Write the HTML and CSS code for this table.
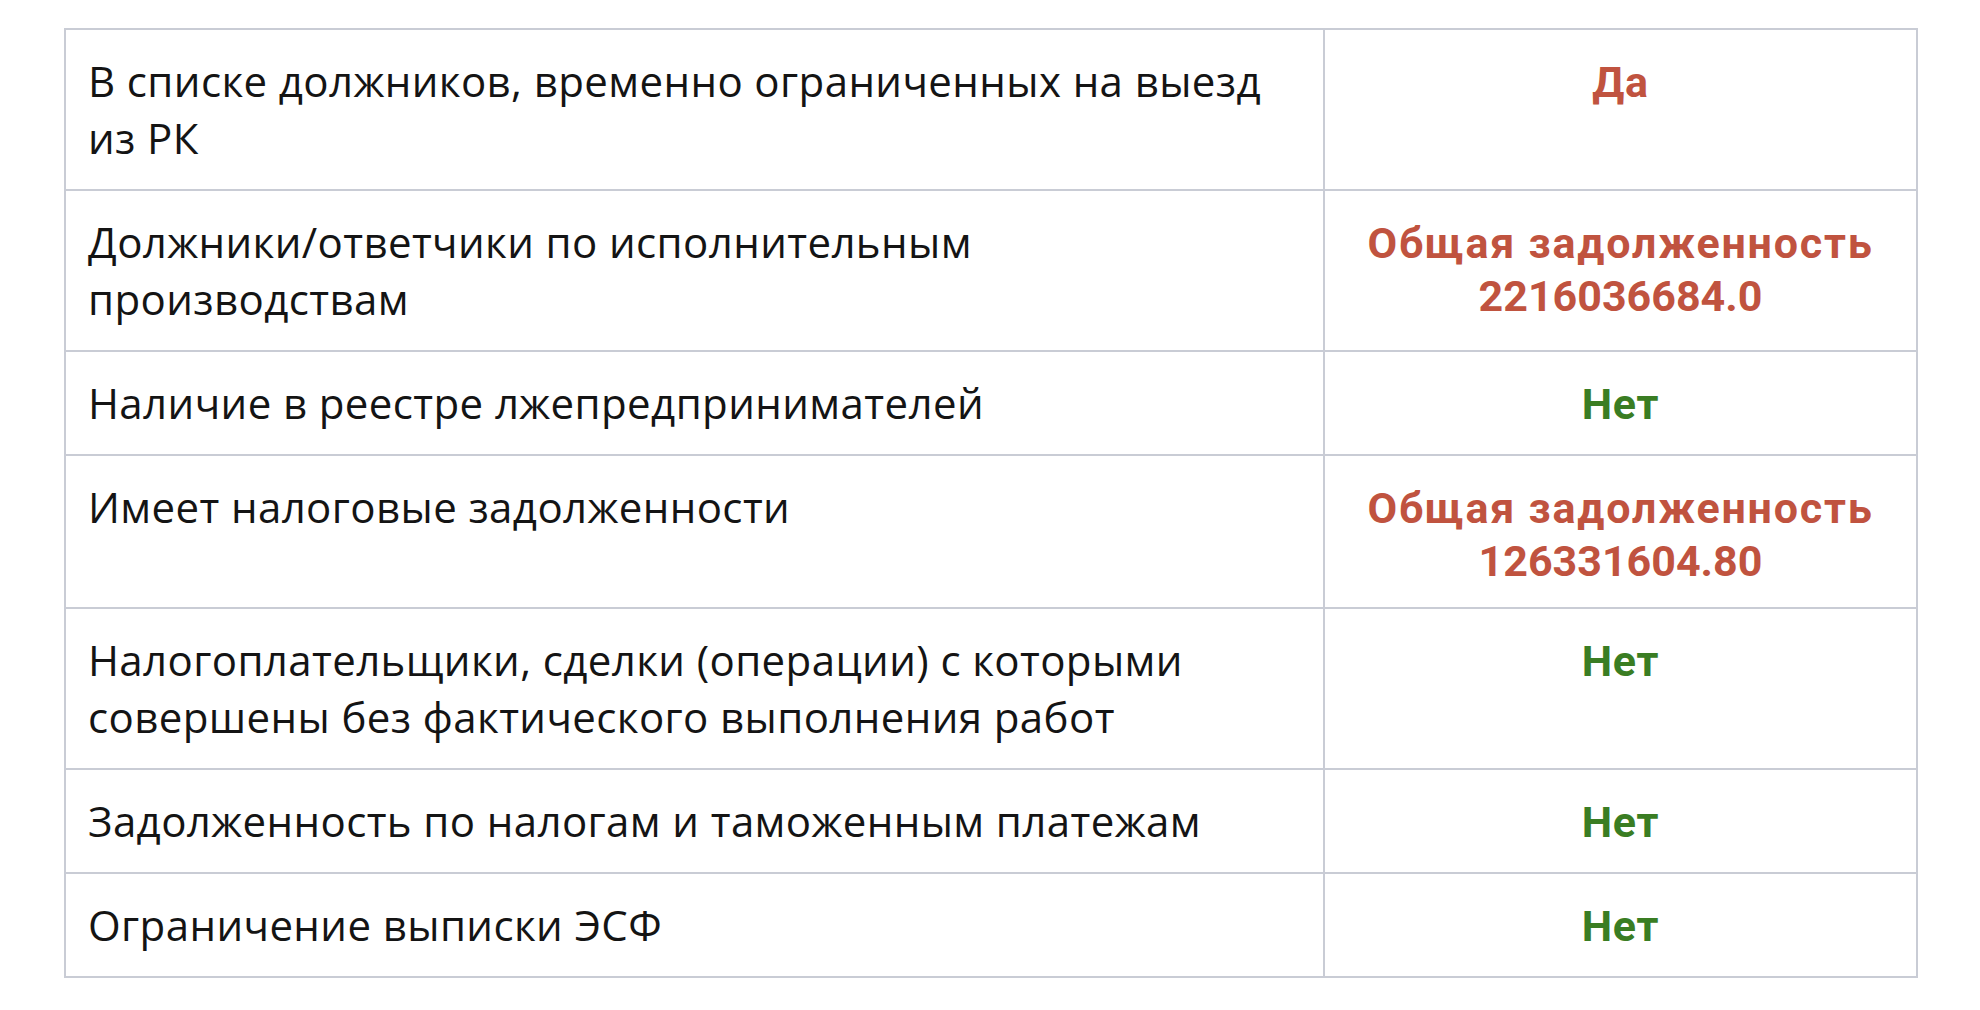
FILE: index.html
```html
<!DOCTYPE html>
<html lang="ru">
<head>
<meta charset="utf-8">
<title>Проверка</title>
<link rel="stylesheet" href="styles.css">
</head>
<body>
<div class="page">
  <table class="checks">
    <colgroup><col class="c-label"><col class="c-value"></colgroup>
    <tbody>
      <tr>
        <td class="label">В списке должников, временно ограниченных на выезд из РК</td>
        <td class="value bad">Да</td>
      </tr>
      <tr>
        <td class="label">Должники/ответчики по исполнительным производствам</td>
        <td class="value bad"><span class="caption">Общая задолженность</span><br><span class="amount">2216036684.0</span></td>
      </tr>
      <tr>
        <td class="label">Наличие в реестре лжепредпринимателей</td>
        <td class="value good">Нет</td>
      </tr>
      <tr>
        <td class="label">Имеет налоговые задолженности</td>
        <td class="value bad"><span class="caption">Общая задолженность</span><br><span class="amount">126331604.80</span></td>
      </tr>
      <tr>
        <td class="label">Налогоплательщики, сделки (операции) с которыми совершены без фактического выполнения работ</td>
        <td class="value good">Нет</td>
      </tr>
      <tr>
        <td class="label">Задолженность по налогам и таможенным платежам</td>
        <td class="value good">Нет</td>
      </tr>
      <tr>
        <td class="label">Ограничение выписки ЭСФ</td>
        <td class="value good">Нет</td>
      </tr>
    </tbody>
  </table>
</div>
</body>
</html>
```

FILE: styles.css
```css
html, body {
  margin: 0;
  padding: 0;
  background: #ffffff;
}

.page {
  padding: 28px 64px;
}

.checks {
  width: 1852px;
  border-collapse: collapse;
  table-layout: fixed;
  font-family: "Open Sans", "Noto Sans", sans-serif;
  font-size: 42px;
  line-height: 57px;
  letter-spacing: 0.4px;
  color: #141414;
}

.c-label { width: 1259px; }
.c-value { width: 593px; }

.checks td {
  border: 2px solid #c9ccd5;
  padding: 22px 22px 23px;
  vertical-align: top;
}

.checks td.value {
  padding-top: 26px;
  padding-bottom: 19px;
  text-align: center;
  font-family: Roboto, "Liberation Sans", sans-serif;
  font-size: 43px;
  line-height: 53px;
  font-weight: 700;
  letter-spacing: 0.8px;
}

.caption { letter-spacing: 1.8px; }
.amount { letter-spacing: 0; }

.bad { color: #c0533f; }
.good { color: #3a7d23; }
```
